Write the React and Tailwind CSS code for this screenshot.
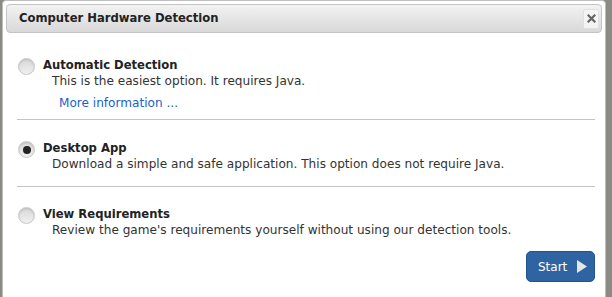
export default function App() {
  const font = { fontFamily: '"DejaVu Sans", Verdana, sans-serif' };
  const Radio = ({ checked }) => (
    <div className="w-[17px] h-[17px] rounded-full border border-[#c8c8c8] bg-gradient-to-b from-[#d8d8d8] to-[#f0f0f0] flex items-center justify-center shrink-0 shadow-[inset_0_1px_2px_rgba(0,0,0,0.15)]">
      {checked && <div className="w-[8px] h-[8px] rounded-full bg-[#222]" />}
    </div>
  );
  const Option = ({ checked, title, desc, link }) => (
    <div className="flex items-start">
      <div className="w-[40px] pl-[15px] pt-[1px]"><Radio checked={checked} /></div>
      <div>
        <div className="text-[11.6px] font-bold text-[#222] leading-[16px]">{title}</div>
        <div className="text-[12.1px] text-[#333] leading-[17px] pl-[9px]">{desc}</div>
        {link && <div className="text-[12.1px] text-[#1a5fc8] leading-[16px] pl-[16px] mt-[5px]">{link}</div>}
      </div>
    </div>
  );
  return (
    <div className="w-[612px] h-[297px] bg-[#8c8a84] overflow-hidden flex" style={font}>
      <div className="ml-[2px] w-[604px] h-[310px] bg-white border border-[#bdbdbd] rounded-[4px] flex flex-col">
        <div className="mx-[3px] mt-[3px] h-[29px] rounded-[4px] border border-[#c4c4c4] bg-gradient-to-b from-[#f2f2f2] to-[#d9d9d9] flex items-center justify-between pl-[12px] pr-[2px]">
          <div className="text-[11.6px] font-bold text-[#222]">Computer Hardware Detection</div>
          <div className="w-[16px] h-[20px] bg-[#f4f4f4] border border-[#e0e0e0] rounded-[2px] flex items-center justify-center">
            <svg width="9" height="9" viewBox="0 0 9 9">
              <path d="M1.5 1.5L7.5 7.5M7.5 1.5L1.5 7.5" stroke="#666" strokeWidth="2.2" strokeLinecap="square" />
            </svg>
          </div>
        </div>
        <div className="pt-[24px] pr-[10px]">
          <Option title="Automatic Detection" desc="This is the easiest option. It requires Java." link="More information ..." />
          <div className="ml-[14px] mt-[8px] h-px bg-[#c4c4c4]" />
          <div className="pt-[20px]">
            <Option checked title="Desktop App" desc="Download a simple and safe application. This option does not require Java." />
          </div>
          <div className="ml-[14px] mt-[13px] h-px bg-[#c4c4c4]" />
          <div className="pt-[19px]">
            <Option title="View Requirements" desc="Review the game's requirements yourself without using our detection tools." />
          </div>
          <div className="flex justify-end mt-[12px]">
            <div className="w-[69px] h-[31px] rounded-[5px] bg-[#2e64a2] border border-[#24528a] flex items-center justify-between pl-[11px] pr-[7px]">
              <span className="text-[12px] text-white">Start</span>
              <svg width="10" height="13" viewBox="0 0 10 13"><path d="M0 0L10 6.5L0 13Z" fill="#e6e6e6" /></svg>
            </div>
          </div>
        </div>
      </div>
    </div>
  );
}
